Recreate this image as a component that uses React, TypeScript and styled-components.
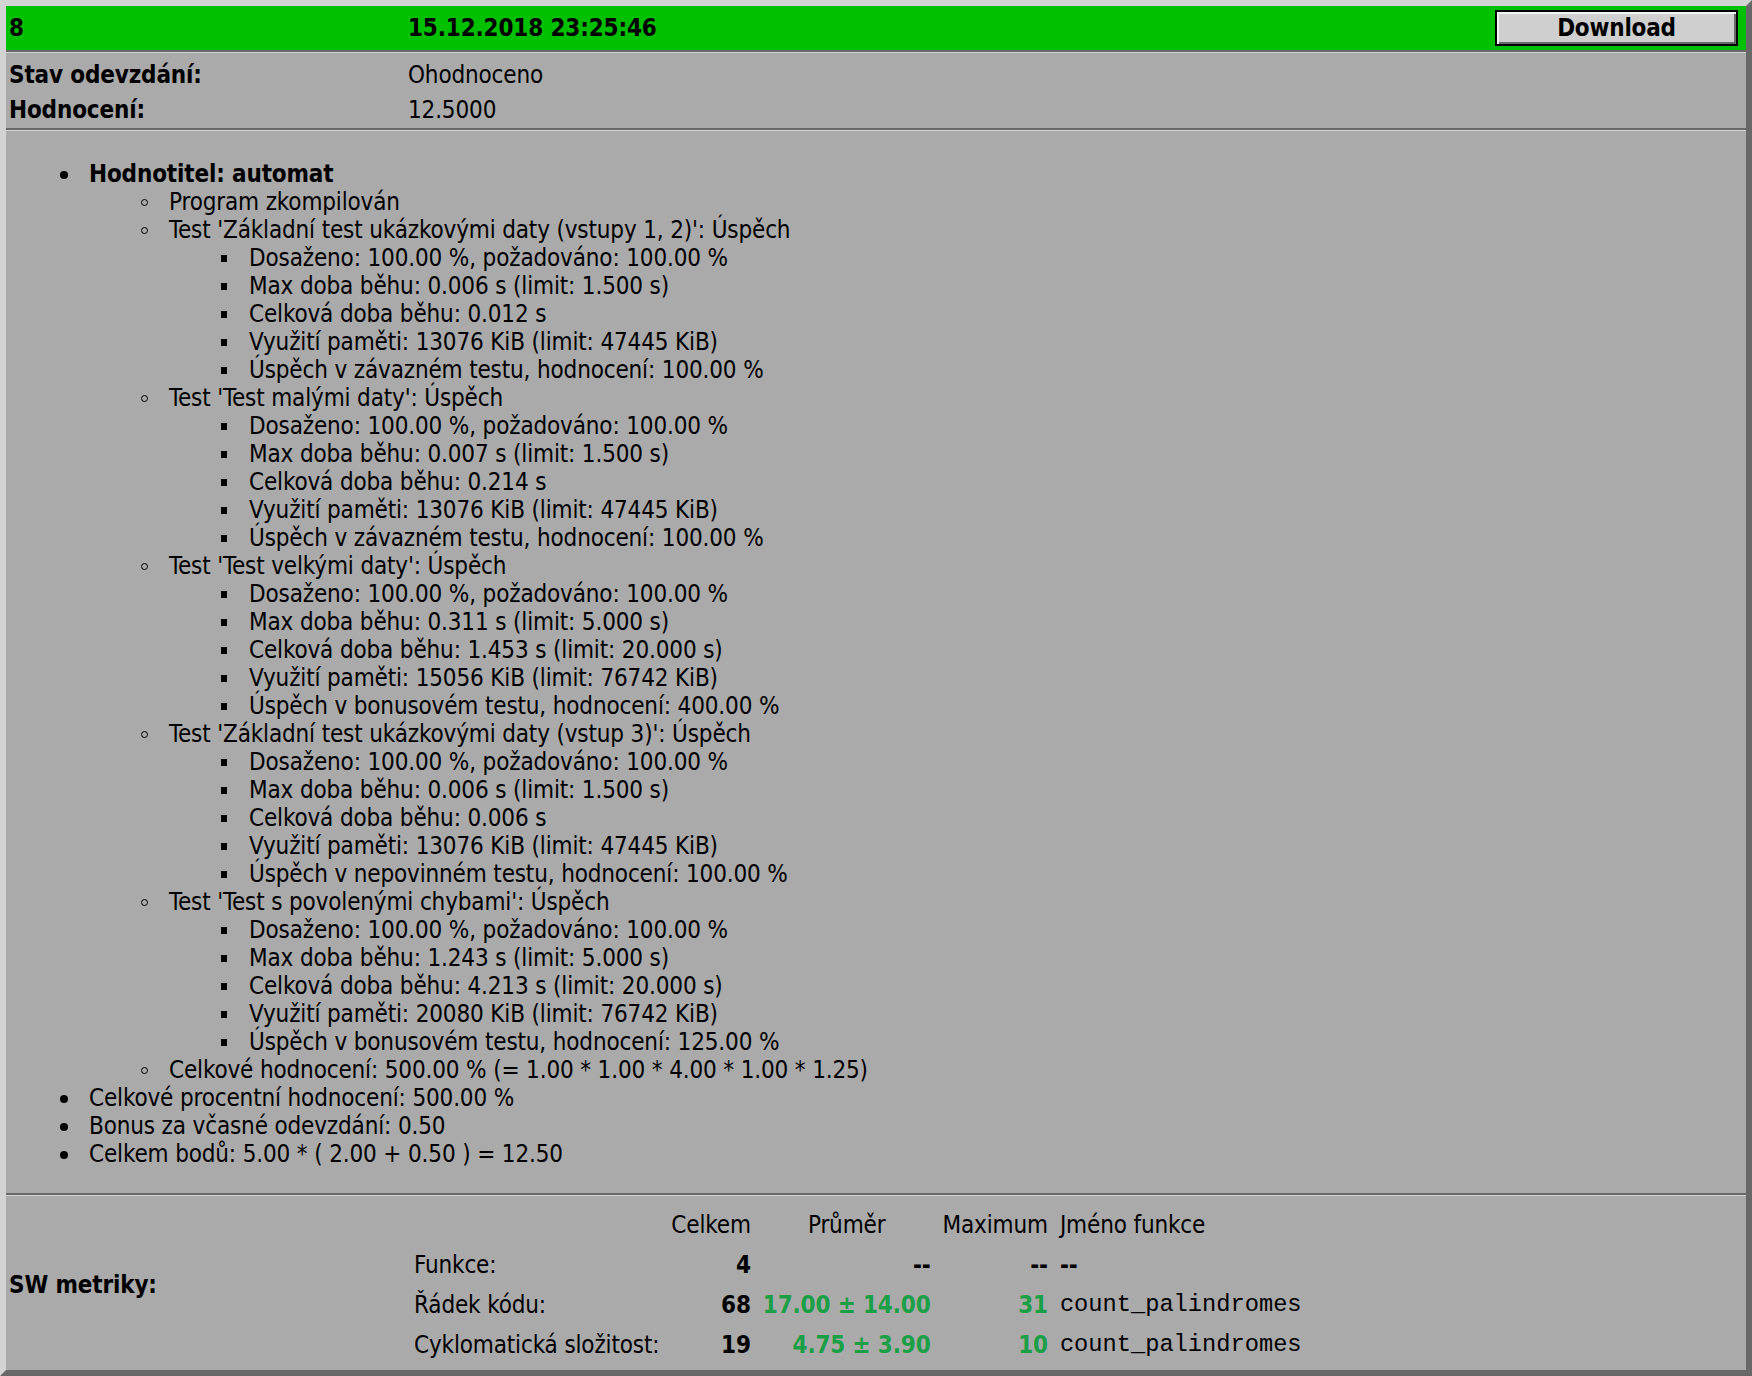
import React from "react";
import styled, { createGlobalStyle } from "styled-components";

const GlobalStyle = createGlobalStyle`
  html, body {
    margin: 0;
    padding: 0;
    background: #aaaaaa;
  }
  body {
    font-family: "DejaVu Sans Condensed", "DejaVu Sans", sans-serif;
    font-stretch: condensed;
    font-size: 24px;
    line-height: 28px;
    letter-spacing: -0.15px;
    color: #000;
  }
`;

const Frame = styled.div`
  box-sizing: border-box;
  min-height: 100vh;
  border: 6px solid;
  border-color: #d3d3d3 #686868 #686868 #d3d3d3;
  background: #aaaaaa;
  display: flex;
  flex-direction: column;
`;

const Divider = styled.div`
  height: 0;
  border-top: 2px solid #686868;
  border-bottom: 1px solid #d3d3d3;
`;

const HeaderBar = styled.div`
  background: #00c000;
  display: grid;
  grid-template-columns: 399px 1fr auto;
  align-items: center;
  padding: 4px 8px 4px 3px;
  font-weight: bold;
`;

const DownloadButton = styled.button`
  width: 243px;
  height: 36px;
  box-sizing: border-box;
  font: inherit;
  font-weight: bold;
  letter-spacing: -0.2px;
  line-height: 24px;
  background: #cfcfcf;
  color: #000;
  border: 2px solid #000;
  box-shadow: inset 2px 2px 0 #f4f4f4, inset -2px -2px 0 #6a6a6a;
  padding: 0;
  cursor: pointer;
`;

const InfoSection = styled.div`
  padding: 4px 3px 1px;
`;

const InfoRow = styled.div`
  display: grid;
  grid-template-columns: 399px 1fr;
  padding: 4px 0 3px;
`;

const Label = styled.div`
  font-weight: bold;
`;

const ListSection = styled.div`
  flex: 1;
  padding: 5px 3px 1px;
`;

type Marker = "disc" | "circle" | "square";

const markerShape = (m: Marker) => {
  if (m === "disc")
    return `width: 8px; height: 8px; border-radius: 50%; background: #000; left: -29px; top: 11px;`;
  if (m === "circle")
    return `width: 5px; height: 5px; border-radius: 50%; border: 1.5px solid #000; left: -28px; top: 11px;`;
  return `width: 6px; height: 7px; background: #000; left: -28px; top: 11px;`;
};

const List = styled.ul<{ $type: Marker }>`
  list-style: none;
  margin: ${(p) => (p.$type === "disc" ? "24px 0" : "0")};
  padding-left: 80px;

  & > li {
    position: relative;
  }

  & > li::before {
    content: "";
    position: absolute;
    ${(p) => markerShape(p.$type)}
  }
`;

const Strong = styled.span`
  font-weight: bold;
`;

const MetricsSection = styled.div`
  display: grid;
  grid-template-columns: 399px auto;
  justify-content: start;
  align-items: center;
  padding: 9px 3px 5px;
`;

const MetricsTable = styled.table`
  border-collapse: collapse;
  border-spacing: 0;
`;

const Th = styled.th<{ $align?: string }>`
  font-weight: normal;
  padding: 6px 6px;
  text-align: ${(p) => p.$align || "center"};
  white-space: nowrap;
`;

const Td = styled.td<{ $align?: string; $green?: boolean; $bold?: boolean; $mono?: boolean }>`
  padding: 6px 6px;
  white-space: nowrap;
  text-align: ${(p) => p.$align || "left"};
  font-weight: ${(p) => (p.$bold ? "bold" : "normal")};
  color: ${(p) => (p.$green ? "#1a9f47" : "#000")};
  font-family: ${(p) =>
    p.$mono ? '"Liberation Mono", "Courier New", monospace' : "inherit"};
  font-size: ${(p) => (p.$mono ? "23.7px" : "inherit")};
  font-stretch: ${(p) => (p.$mono ? "normal" : "inherit")};
  letter-spacing: ${(p) => (p.$mono ? "0" : "inherit")};
`;

type Test = { name: string; items: string[] };

const tests: Test[] = [
  {
    name: "Test 'Základní test ukázkovými daty (vstupy 1, 2)': Úspěch",
    items: [
      "Dosaženo: 100.00 %, požadováno: 100.00 %",
      "Max doba běhu: 0.006 s (limit: 1.500 s)",
      "Celková doba běhu: 0.012 s",
      "Využití paměti: 13076 KiB (limit: 47445 KiB)",
      "Úspěch v závazném testu, hodnocení: 100.00 %",
    ],
  },
  {
    name: "Test 'Test malými daty': Úspěch",
    items: [
      "Dosaženo: 100.00 %, požadováno: 100.00 %",
      "Max doba běhu: 0.007 s (limit: 1.500 s)",
      "Celková doba běhu: 0.214 s",
      "Využití paměti: 13076 KiB (limit: 47445 KiB)",
      "Úspěch v závazném testu, hodnocení: 100.00 %",
    ],
  },
  {
    name: "Test 'Test velkými daty': Úspěch",
    items: [
      "Dosaženo: 100.00 %, požadováno: 100.00 %",
      "Max doba běhu: 0.311 s (limit: 5.000 s)",
      "Celková doba běhu: 1.453 s (limit: 20.000 s)",
      "Využití paměti: 15056 KiB (limit: 76742 KiB)",
      "Úspěch v bonusovém testu, hodnocení: 400.00 %",
    ],
  },
  {
    name: "Test 'Základní test ukázkovými daty (vstup 3)': Úspěch",
    items: [
      "Dosaženo: 100.00 %, požadováno: 100.00 %",
      "Max doba běhu: 0.006 s (limit: 1.500 s)",
      "Celková doba běhu: 0.006 s",
      "Využití paměti: 13076 KiB (limit: 47445 KiB)",
      "Úspěch v nepovinném testu, hodnocení: 100.00 %",
    ],
  },
  {
    name: "Test 'Test s povolenými chybami': Úspěch",
    items: [
      "Dosaženo: 100.00 %, požadováno: 100.00 %",
      "Max doba běhu: 1.243 s (limit: 5.000 s)",
      "Celková doba běhu: 4.213 s (limit: 20.000 s)",
      "Využití paměti: 20080 KiB (limit: 76742 KiB)",
      "Úspěch v bonusovém testu, hodnocení: 125.00 %",
    ],
  },
];

export default function App() {
  return (
    <>
      <GlobalStyle />
      <Frame>
        <HeaderBar>
          <span>8</span>
          <span>15.12.2018 23:25:46</span>
          <DownloadButton>Download</DownloadButton>
        </HeaderBar>
        <Divider />
        <InfoSection>
          <InfoRow>
            <Label>Stav odevzdání:</Label>
            <div>Ohodnoceno</div>
          </InfoRow>
          <InfoRow>
            <Label>Hodnocení:</Label>
            <div>12.5000</div>
          </InfoRow>
        </InfoSection>
        <Divider />
        <ListSection>
          <List $type="disc">
            <li>
              <Strong>Hodnotitel: automat</Strong>
              <List $type="circle">
                <li>Program zkompilován</li>
                {tests.map((t) => (
                  <li key={t.name}>
                    {t.name}
                    <List $type="square">
                      {t.items.map((it, i) => (
                        <li key={i}>{it}</li>
                      ))}
                    </List>
                  </li>
                ))}
                <li>Celkové hodnocení: 500.00 % (= 1.00 * 1.00 * 4.00 * 1.00 * 1.25)</li>
              </List>
            </li>
            <li>Celkové procentní hodnocení: 500.00 %</li>
            <li>Bonus za včasné odevzdání: 0.50</li>
            <li>Celkem bodů: 5.00 * ( 2.00 + 0.50 ) = 12.50</li>
          </List>
        </ListSection>
        <Divider />
        <MetricsSection>
          <Label>SW metriky:</Label>
          <MetricsTable>
            <thead>
              <tr>
                <Th />
                <Th>Celkem</Th>
                <Th>Průměr</Th>
                <Th>Maximum</Th>
                <Th $align="left">Jméno funkce</Th>
              </tr>
            </thead>
            <tbody>
              <tr>
                <Td>Funkce:</Td>
                <Td $align="right" $bold>4</Td>
                <Td $align="right" $bold>--</Td>
                <Td $align="right" $bold>--</Td>
                <Td $bold>--</Td>
              </tr>
              <tr>
                <Td>Řádek kódu:</Td>
                <Td $align="right" $bold>68</Td>
                <Td $align="right" $bold $green>17.00 ± 14.00</Td>
                <Td $align="right" $bold $green>31</Td>
                <Td $mono>count_palindromes</Td>
              </tr>
              <tr>
                <Td>Cyklomatická složitost:</Td>
                <Td $align="right" $bold>19</Td>
                <Td $align="right" $bold $green>4.75 ± 3.90</Td>
                <Td $align="right" $bold $green>10</Td>
                <Td $mono>count_palindromes</Td>
              </tr>
            </tbody>
          </MetricsTable>
        </MetricsSection>
      </Frame>
    </>
  );
}
